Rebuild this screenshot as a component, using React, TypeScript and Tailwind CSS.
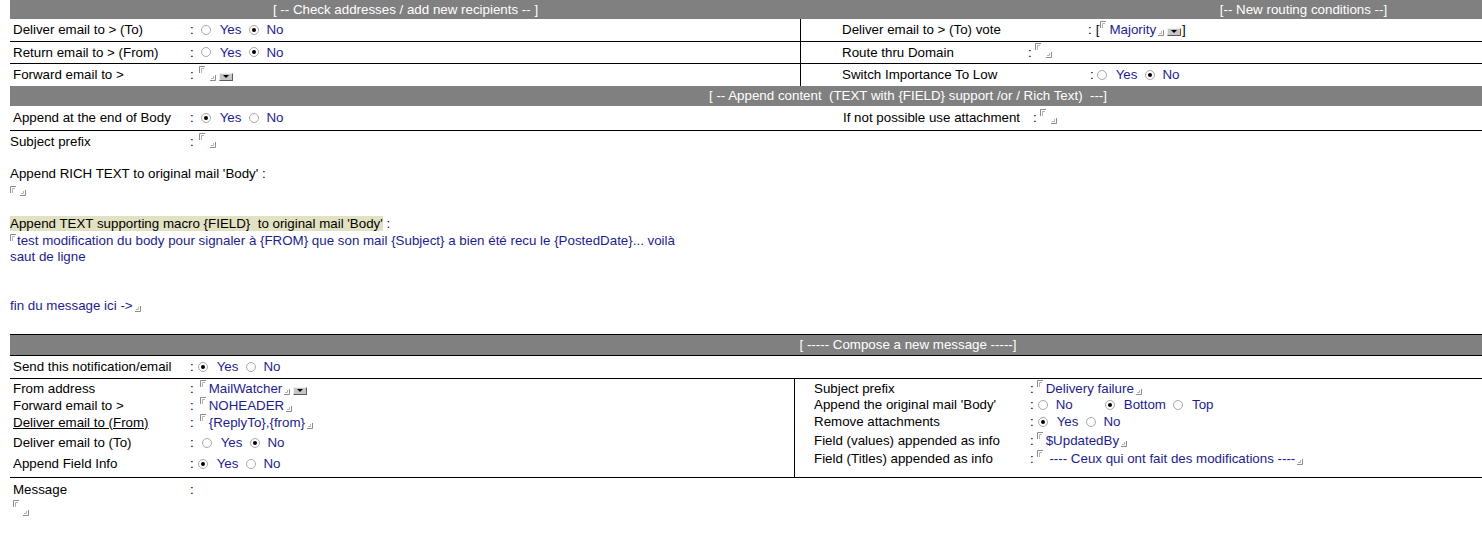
const blue = "text-[#1c1c90]";

function Open({ className = "" }: { className?: string }) {
  return (
    <svg width="6" height="7" viewBox="0 0 6 7" className={"shrink-0 " + className}>
      <path d="M0.5 7V0.5H6" stroke="#8c8c8c" fill="none" />
      <path d="M2.5 7V2.5H5" stroke="#b4b4b4" fill="none" />
    </svg>
  );
}

function Close({ className = "" }: { className?: string }) {
  return (
    <svg width="6" height="6" viewBox="0 0 6 6" className={"shrink-0 " + className}>
      <path d="M0 5.5H5.5V0" stroke="#8c8c8c" fill="none" />
      <path d="M1 3.5H3.5V1" stroke="#b4b4b4" fill="none" />
    </svg>
  );
}

function Drop({ className = "" }: { className?: string }) {
  return (
    <span
      className={
        "inline-flex h-[8px] w-[14px] shrink-0 items-center justify-center border border-b-[#5a5a5a] border-l-[#eeeeee] border-r-[#5a5a5a] border-t-[#eeeeee] bg-[#c6c6c6] " +
        className
      }
    >
      <span className="h-0 w-0 border-l-[3px] border-r-[3px] border-t-[3px] border-l-transparent border-r-transparent border-t-black" />
    </span>
  );
}

function Radio({ on = false, className = "" }: { on?: boolean; className?: string }) {
  return (
    <span
      className={
        "flex h-[10px] w-[10px] shrink-0 items-center justify-center rounded-full border border-[#a8a8a8] bg-white " +
        className
      }
    >
      {on && <span className="h-[4px] w-[4px] rounded-full bg-black" />}
    </span>
  );
}

// Notes style field: corner marks round the value
function Field({ v, drop, className = "" }: { v?: string; drop?: boolean; className?: string }) {
  return (
    <span className={"flex h-[16px] items-start " + className}>
      <Open className="-mt-[1px]" />
      {v ? (
        <span className={"ml-[3px] whitespace-pre leading-[16px] " + blue}>{v}</span>
      ) : (
        <span className="w-[4px]" />
      )}
      <Close className={"mb-[2px] self-end " + (v ? "ml-[2px]" : "ml-[1px]")} />
      {drop && <Drop className="mb-[2px] ml-[3px] self-end" />}
    </span>
  );
}

function YesNo({ yes, className = "" }: { yes?: boolean; className?: string }) {
  return (
    <span className={"flex items-center " + className}>
      <Radio on={yes} />
      <span className={"ml-[9px] " + blue}>Yes</span>
      <Radio on={!yes} className="ml-[8px]" />
      <span className={"ml-[7px] " + blue}>No</span>
    </span>
  );
}

function Row({ label, w, children, className = "" }: { label: React.ReactNode; w: string; children?: React.ReactNode; className?: string }) {
  return (
    <div className={"flex items-center " + className}>
      <span className={"shrink-0 whitespace-pre " + w}>{label}</span>
      <span>:</span>
      {children}
    </div>
  );
}

export default function App() {
  return (
    <div className="h-[535px] w-full overflow-hidden bg-white font-['Liberation_Sans',Arial,sans-serif] text-[13.33px] text-black">
      <div className="w-[1806px] pl-[10px]">
        {/* Check addresses / routing */}
        <div className="flex h-[19px] bg-[#808080] leading-[19px] text-white">
          <div className="w-[791px] text-center">[ -- Check addresses / add new recipients -- ]</div>
          <div className="flex-1 text-center">[-- New routing conditions --]</div>
        </div>

        <div className="flex h-[23px] border-b border-black">
          <div className="flex w-[791px] items-center border-r border-black pl-[3px]">
            <Row label="Deliver email to > (To)" w="w-[177px]">
              <YesNo className="ml-[7px]" />
            </Row>
          </div>
          <div className="flex flex-1 items-center pl-[41px]">
            <Row label="Deliver email to > (To) vote" w="w-[246px]">
              <span className="ml-[4px]">[</span>
              <Field v="Majority" drop className="ml-[1px]" />
              <span className="ml-[1px]">]</span>
            </Row>
          </div>
        </div>

        <div className="flex h-[22px] border-b border-black">
          <div className="flex w-[791px] items-center border-r border-black pl-[3px]">
            <Row label="Return email to > (From)" w="w-[177px]">
              <YesNo className="ml-[7px]" />
            </Row>
          </div>
          <div className="flex flex-1 items-center pl-[41px]">
            <Row label="Route thru Domain" w="w-[186px]">
              <Field className="ml-[3px]" />
            </Row>
          </div>
        </div>

        <div className="flex h-[22px]">
          <div className="flex w-[791px] items-center border-r border-black pl-[3px]">
            <Row label="Forward email to >" w="w-[177px]">
              <Field drop className="ml-[5px]" />
            </Row>
          </div>
          <div className="flex flex-1 items-center pl-[41px]">
            <Row label="Switch Importance To Low" w="w-[248px]">
              <YesNo className="ml-[3px]" />
            </Row>
          </div>
        </div>

        {/* Append content */}
        <div className="h-[20px] whitespace-pre bg-[#808080] text-center leading-[20px] text-white">
          {"[ -- Append content  (TEXT with {FIELD} support /or / Rich Text)  ---]"}
        </div>

        <div className="flex h-[25px] border-b border-black">
          <div className="flex w-[791px] items-center pl-[3px]">
            <Row label="Append at the end of Body" w="w-[177px]">
              <YesNo yes className="ml-[7px]" />
            </Row>
          </div>
          <div className="flex flex-1 items-center pl-[42px]">
            <Row label="If not possible use attachment" w="w-[190px]">
              <Field className="ml-[3px]" />
            </Row>
          </div>
        </div>

        <div className="h-[203px]">
          <Row label="Subject prefix" w="w-[180px]" className="h-[21px]">
            <Field className="ml-[5px]" />
          </Row>
          <div className="mt-[14px] leading-[16px]">Append RICH TEXT to original mail 'Body' :</div>
          <div className="flex h-[15px]">
            <Open className="mt-[4px]" />
            <Close className="mb-[1px] ml-[4px] self-end" />
          </div>
          <div className="mt-[19px] whitespace-pre leading-[15px]">
            <span className="bg-[#e2e2c2]">{"Append TEXT supporting macro {FIELD}  to original mail 'Body'"}</span> :
          </div>
          <div className={"mt-[2px] leading-[16.3px] " + blue}>
            <div className="flex items-start">
              <Open className="mt-[1px]" />
              <span className="ml-[1px]">test modification du body pour signaler à {"{FROM}"} que son mail {"{Subject}"} a bien été recu le {"{PostedDate}"}... voilà</span>
            </div>
            <div>saut de ligne</div>
            <div className="h-[16.3px]" />
            <div className="h-[16.3px]" />
            <div className="flex items-end">
              <span>fin du message ici -&gt;</span>
              <Close className="mb-[2px] ml-[2px]" />
            </div>
          </div>
        </div>

        {/* Compose */}
        <div className="h-[22px] whitespace-pre border-y border-black bg-[#808080] text-center leading-[20px] text-white">
          [ ----- Compose a new message -----]
        </div>

        <div className="flex h-[23px] items-center border-b border-black pl-[3px]">
          <Row label="Send this notification/email" w="w-[177px]">
            <YesNo yes className="ml-[4px]" />
          </Row>
        </div>

        <div className="flex h-[99px] border-b border-black">
          <div className="w-[785px] border-r border-black pl-[3px]">
            <Row label="From address" w="w-[177px]" className="h-[19px]">
              <Field v="MailWatcher" drop className="ml-[6px]" />
            </Row>
            <Row label="Forward email to >" w="w-[177px]" className="h-[15px]">
              <Field v="NOHEADER" className="ml-[6px]" />
            </Row>
            <Row label={<span className="underline">Deliver email to (From)</span>} w="w-[177px]" className="h-[20px]">
              <Field v="{ReplyTo},{from}" className="ml-[6px]" />
            </Row>
            <Row label="Deliver email to (To)" w="w-[177px]" className="h-[20px]">
              <YesNo className="ml-[8px]" />
            </Row>
            <Row label="Append Field Info" w="w-[177px]" className="h-[22px]">
              <YesNo yes className="ml-[4px]" />
            </Row>
          </div>
          <div className="flex-1 pl-[19px] pt-[2px]">
            <Row label="Subject prefix" w="w-[216px]" className="h-[16px]">
              <Field v="Delivery failure" className="ml-[3px]" />
            </Row>
            <Row label="Append the original mail 'Body'" w="w-[216px]" className="h-[15px]">
              <span className="ml-[4px] flex items-center">
                <Radio />
                <span className={"ml-[8px] " + blue}>No</span>
                <Radio on className="ml-[32px]" />
                <span className={"ml-[9px] " + blue}>Bottom</span>
                <Radio className="ml-[7px]" />
                <span className={"ml-[9px] " + blue}>Top</span>
              </span>
            </Row>
            <Row label="Remove attachments" w="w-[216px]" className="h-[20px]">
              <YesNo yes className="ml-[4px]" />
            </Row>
            <Row label="Field (values) appended as info" w="w-[216px]" className="h-[18px]">
              <Field v="$UpdatedBy" className="ml-[3px]" />
            </Row>
            <Row label="Field (Titles) appended as info" w="w-[216px]" className="h-[18px]">
              <Field v=" ---- Ceux qui ont fait des modifications ----" className="ml-[3px]" />
            </Row>
          </div>
        </div>

        <div className="pl-[3px]">
          <Row label="Message" w="w-[177px]" className="mt-[4px] h-[16px]" />
          <Open className="mt-[2px]" />
          <Close className="ml-[10px] mt-[3px]" />
        </div>
      </div>
    </div>
  );
}
